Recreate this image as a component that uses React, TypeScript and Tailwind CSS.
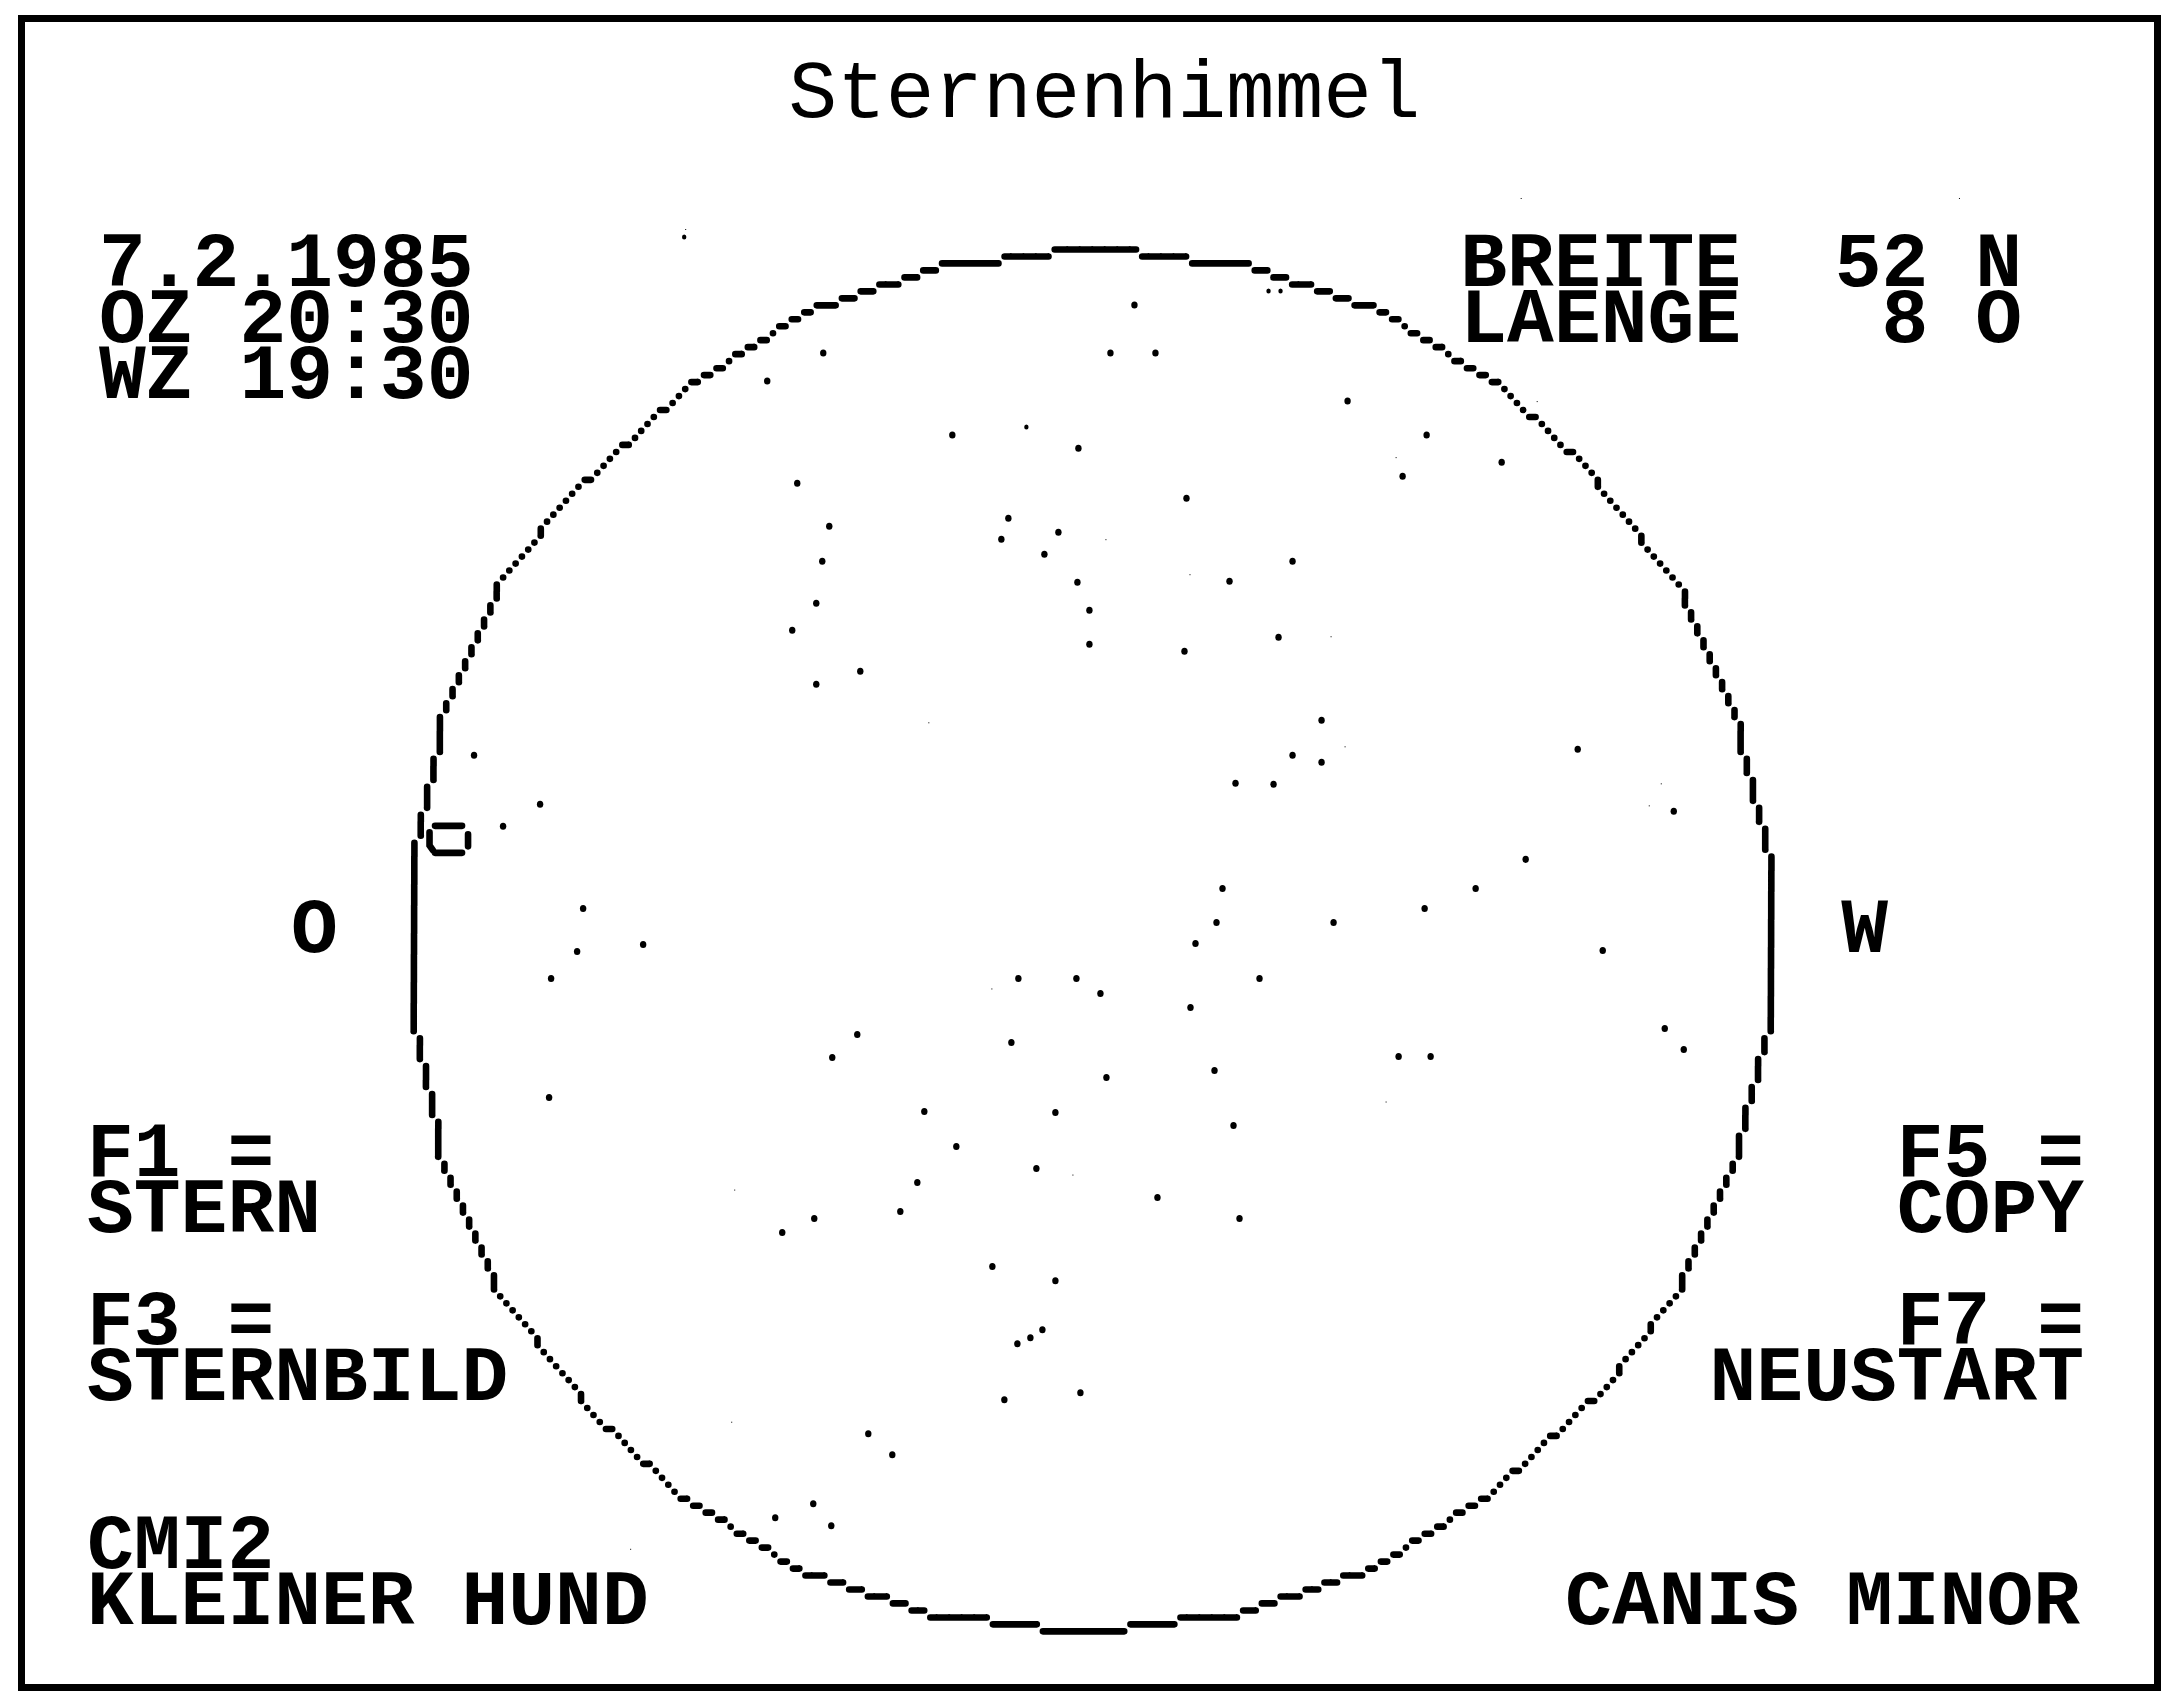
const CENTER_X = 1090;
const CENTER_Y = 940;
const CELL_W = 6.25;
const CELL_H = 6.975;
const COLS = 110;
const ROWS = 100;

type Point = [number, number];

// The horizon is a 30-sided polygon plotted on a coarse 320 x 200 raster.
function plotHorizon(): Map<string, Point> {
  const corners: Point[] = Array.from({ length: 30 }, (_, i) => {
    const a = (i * 12 * Math.PI) / 180;
    const col = Math.trunc(COLS * Math.sin(a));
    const row = Math.trunc(-ROWS * Math.cos(a));
    return [Math.max(-108, col), Math.max(-99, Math.min(99, row))];
  });
  const cells = new Map<string, Point>();
  corners.forEach(([x0, y0], i) => {
    const [x1, y1] = corners[(i + 1) % corners.length];
    const dx = Math.abs(x1 - x0);
    const dy = Math.abs(y1 - y0);
    const sx = Math.sign(x1 - x0);
    const sy = Math.sign(y1 - y0);
    const long = Math.max(dx, dy);
    const short = Math.min(dx, dy);
    for (let s = 0; s <= long; s++) {
      const t = Math.floor((s * (short + 1)) / (long + 1));
      const p: Point = dx >= dy ? [x0 + sx * s, y0 + sy * t] : [x0 + sx * t, y0 + sy * s];
      cells.set(p.join(), p);
    }
  });
  return cells;
}

// Each cell is a round dot; cells that share an edge are joined into a bar.
function horizonPath(): string {
  const cells = plotHorizon();
  return [...cells.values()]
    .map(([c, r]) => {
      const start = `M${(CENTER_X + c * CELL_W - r * 0.028).toFixed(1)} ${(CENTER_Y + r * CELL_H).toFixed(1)}`;
      const right = cells.has(`${c + 1},${r}`) ? `${start}h${CELL_W}` : "";
      const down = cells.has(`${c},${r + 1}`) ? `${start}v${CELL_H}` : "";
      return right + down || `${start}h0.1`;
    })
    .join("");
}

const HORIZON = horizonPath();

const STARS: Point[] = [
  [824, 353], [768, 381], [953, 435], [1079, 448], [798, 483], [830, 526], [823, 561], [817, 603],
  [793, 630], [817, 684], [861, 671], [1009, 518], [1002, 539], [1059, 532], [1045, 554], [1078, 582],
  [1090, 610], [1090, 644], [541, 804], [504, 826], [475, 755], [1135, 305], [1111, 353], [1156, 353],
  [1348, 401], [1427, 435], [1502, 462], [1403, 476], [1187, 498], [1293, 561], [1230, 581],
  [1279, 637], [1185, 651], [1322, 720], [1293, 755], [1322, 762], [1236, 783], [1274, 784],
  [1578, 749], [1674, 811], [1526, 859], [1476, 888], [1223, 888], [584, 908], [644, 944], [578, 951],
  [552, 978], [1019, 978], [1077, 978], [1101, 993], [858, 1034], [833, 1057], [1012, 1042],
  [550, 1097], [925, 1111], [1056, 1112], [957, 1146], [1037, 1168], [918, 1182], [901, 1211],
  [815, 1218], [783, 1232], [993, 1266], [1056, 1280], [1043, 1329], [1031, 1337], [1018, 1343],
  [1081, 1392], [1005, 1399], [869, 1433], [893, 1454], [814, 1503], [776, 1517], [832, 1525],
  [1425, 908], [1217, 922], [1334, 922], [1196, 943], [1603, 950], [1260, 978], [1191, 1007],
  [1665, 1028], [1684, 1049], [1399, 1056], [1431, 1056], [1215, 1070], [1107, 1077], [1234, 1125],
  [1158, 1197], [1240, 1218],
];

const FAINT_STARS: Point[] = [[1027, 427], [1269, 291], [1281, 291], [685, 237]];

const SPECKS: Point[] = [
  [686, 229], [1521, 198], [1959, 198], [1537, 401], [1190, 574], [1331, 636], [1345, 746],
  [992, 988], [1386, 1101], [735, 1189], [732, 1421], [631, 1548], [1649, 805], [1661, 783],
  [1106, 539], [1396, 457], [929, 722], [1073, 1174],
];

function SkyChart() {
  return (
    <svg
      viewBox="399 237 1383 1400"
      role="img"
      aria-label="Sternkarte"
      className="col-start-1 row-start-1 w-[65%] justify-self-center overflow-visible fill-black"
    >
      <path d={HORIZON} fill="none" stroke="black" strokeWidth={6.6} strokeLinecap="round" />
      {STARS.map(([x, y]) => (
        <ellipse key={`${x},${y}`} cx={x} cy={y} rx={3.2} ry={3.5} />
      ))}
      {FAINT_STARS.map(([x, y]) => (
        <ellipse key={`${x},${y}`} cx={x} cy={y} rx={2.2} ry={2.5} />
      ))}
      {SPECKS.map(([x, y]) => (
        <rect key={`${x},${y}`} x={x} y={y} width={1} height={1} />
      ))}
      <path
        d="M436 825.500H463M436 852.500H463M430.500 832V845L434 850M469 834V846"
        fill="none"
        stroke="black"
        strokeWidth={6.6}
        strokeLinecap="round"
      />
    </svg>
  );
}

function MenuKey({ name, action, align }: { name: string; action: string; align: string }) {
  return (
    <button type="button" className={`block cursor-pointer ${align}`}>
      <span className="block">{name} =</span>
      <span className="block">{action}</span>
    </button>
  );
}

export default function App() {
  return (
    <main className="min-h-screen bg-white px-[18px] pt-[15px] pb-[18px] font-['Liberation_Mono',monospace] text-[78px] leading-[56px] text-black">
      <div className="border-[7px] border-black py-[46px]">
        <h1 className="pl-[30px] text-center text-[81px] leading-[56px] font-normal">Sternenhimmel</h1>
        <section className="mt-[113px] grid font-bold">
          <SkyChart />
          <div className="z-10 col-start-1 row-start-1 flex flex-col">
            <div className="flex justify-between pr-[132px] pl-[74px] whitespace-pre">
              <div>
                <p>7.2.1985</p>
                <p>OZ 20:30</p>
                <p>WZ 19:30</p>
              </div>
              <div>
                <p>{"BREITE  52 N"}</p>
                <p>{"LAENGE   8 O"}</p>
              </div>
            </div>
            <div className="mt-[498px] flex justify-between px-[266px]">
              <p>O</p>
              <p>W</p>
            </div>
            <nav className="mt-[168px] flex justify-between pr-[70px] pl-[62px]">
              <div className="flex flex-col items-start gap-[56px]">
                <MenuKey name="F1" action="STERN" align="text-left" />
                <MenuKey name="F3" action="STERNBILD" align="text-left" />
              </div>
              <div className="flex flex-col items-end gap-[56px]">
                <MenuKey name="F5" action="COPY" align="text-right" />
                <MenuKey name="F7" action="NEUSTART" align="text-right" />
              </div>
            </nav>
            <footer className="mt-[112px] flex items-end justify-between pr-[74px] pl-[62px]">
              <div>
                <p>CMI2</p>
                <p>KLEINER HUND</p>
              </div>
              <p>CANIS MINOR</p>
            </footer>
          </div>
        </section>
      </div>
    </main>
  );
}
